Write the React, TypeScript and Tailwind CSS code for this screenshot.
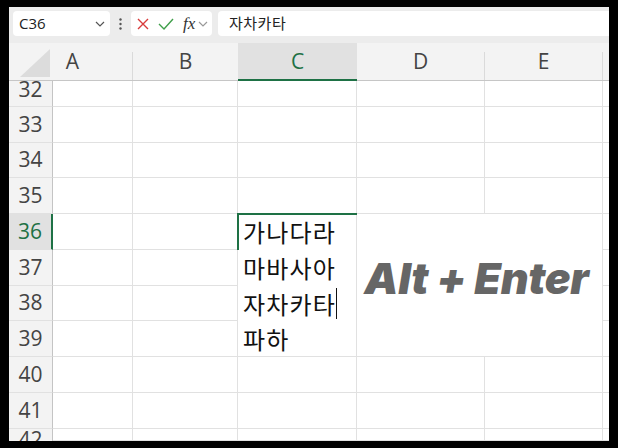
import React from "react";

const FONT = { fontFamily: '"Open Sans", "Noto Sans", "Noto Sans CJK KR", sans-serif' };
const KR = { fontFamily: '"Noto Sans CJK KR", "Noto Sans", sans-serif' };

function Chevron({ className = "" }: { className?: string }) {
  return (
    <svg width="10" height="6" viewBox="0 0 10 6" className={className}>
      <path d="M1 1 L5 5 L9 1" fill="none" stroke="currentColor" strokeWidth="1.2" />
    </svg>
  );
}

const rows = [32, 33, 34, 35, 36, 37, 38, 39, 40, 41, 42];

export default function App() {
  return (
    <div className="w-[618px] h-[448px] bg-black pt-[7px] pl-[9px] overflow-hidden" style={FONT}>
      <div className="w-[600px] h-[434px] bg-white overflow-hidden flex flex-col">
        {/* formula bar */}
        <div className="h-[36px] shrink-0 bg-[#ececec] flex items-start pt-[4px] pl-[4px]">
          <div className="w-[97px] h-[25px] bg-white rounded-[4px] flex items-center justify-between pl-[6px] pr-[5px] text-[15px] text-[#222]">
            <span>C36</span>
            <Chevron className="text-[#555]" />
          </div>
          <div className="w-[21px] h-[25px] flex items-center justify-center">
            <svg width="3" height="12" viewBox="0 0 3 12">
              <circle cx="1.5" cy="1.5" r="1.2" fill="#555" />
              <circle cx="1.5" cy="6" r="1.2" fill="#555" />
              <circle cx="1.5" cy="10.5" r="1.2" fill="#555" />
            </svg>
          </div>
          <div className="w-[81px] h-[25px] bg-white rounded-[4px] flex items-center pl-[6px]">
            <svg width="12" height="12" viewBox="0 0 12 12">
              <path d="M1 1 L11 11 M11 1 L1 11" stroke="#d83b3b" strokeWidth="1.4" fill="none" />
            </svg>
            <svg width="16" height="12" viewBox="0 0 16 12" className="ml-[9px]">
              <path d="M1 6 L6 11 L15 1" stroke="#3f9f4a" strokeWidth="1.4" fill="none" />
            </svg>
            <span className="ml-[9px] text-[17px] italic text-[#333] leading-none" style={{ fontFamily: '"Liberation Serif", serif' }}>
              fx
            </span>
            <Chevron className="ml-[3px] text-[#999]" />
          </div>
          <div className="flex-1 ml-[6px] h-[25px] bg-white rounded-l-[4px] flex items-center pl-[11px] text-[15px] tracking-[0.5px] text-[#222]" style={KR}>
            자차카타
          </div>
        </div>

        {/* column header */}
        <div className="h-[38px] shrink-0 flex bg-[#f3f3f3] text-[21px] text-[#444]">
          <div className="w-[44px] border-b border-[#c6c6c6] flex items-end justify-end pr-[3px] pb-[3px]">
            <svg width="30" height="28" viewBox="0 0 30 28">
              <polygon points="30,0 30,28 0,28" fill="#dcdcdc" />
            </svg>
          </div>
          <div className="w-[80px] border-b border-[#c6c6c6] flex">
            <div className="flex-1 flex items-center justify-center pr-[40px]">A</div>
            <div className="w-px h-[28px] self-end bg-[#dadada]" />
          </div>
          <div className="w-[105px] border-b border-[#c6c6c6] flex">
            <div className="flex-1 flex items-center justify-center">B</div>
          </div>
          <div className="w-[119px] bg-[#e1e1e1] border-b-2 border-[#1e7145] flex items-center justify-center text-[#1e7145] pt-[2px]">
            C
          </div>
          <div className="w-[128px] border-b border-[#c6c6c6] flex">
            <div className="flex-1 flex items-center justify-center">D</div>
            <div className="w-px h-[28px] self-end bg-[#dadada]" />
          </div>
          <div className="w-[118px] border-b border-[#c6c6c6] flex">
            <div className="flex-1 flex items-center justify-center">E</div>
            <div className="w-px h-[28px] self-end bg-[#dadada]" />
          </div>
          <div className="flex-1 border-b border-[#c6c6c6]" />
        </div>

        {/* grid */}
        <div className="grid grid-cols-[44px_80px_105px_119px_128px_118px_1fr] grid-rows-[26px_36px_35px_36px_36px_36px_35px_36px_36px_36px_12px] text-[#444]">
          <div className="col-start-4 row-start-5 row-span-4 bg-white border-r border-b border-[#e1e1e1] relative pl-[5px] text-[24px] tracking-[1.2px] text-[#111]" style={KR}>
            <div className="absolute -left-px -top-px w-[120px] h-[37px] border-t-2 border-l-2 border-[#1e7145]" />
            <div className="h-[36px] flex items-center">가나다라</div>
            <div className="h-[36px] flex items-center">마바사아</div>
            <div className="h-[35px] flex items-center">
              자차카타<span className="inline-block w-px h-[31px] bg-[#111]" />
            </div>
            <div className="h-[36px] flex items-center">파하</div>
          </div>
          <div className="col-start-5 col-span-2 row-start-5 row-span-4 bg-white border-r border-b border-[#e1e1e1] flex items-center justify-center pb-[14px] pr-[6px]">
            <span
              className="text-[43px] font-black italic text-[#666] tracking-[-0.3px]"
              style={{ fontFamily: 'Inter, Lato, sans-serif' }}
            >
              Alt + Enter
            </span>
          </div>
          {rows.map((n) => {
            const active = n === 36;
            const inEdit = n >= 36 && n <= 39;
            return (
              <React.Fragment key={n}>
                <div
                  className={
                    active
                      ? "bg-[#e1e1e1] border-r-2 border-[#1e7145] border-b border-b-[#e1e1e1] flex items-center justify-center text-[21px] text-[#1e7145]"
                      : n === 32
                      ? "bg-[#f3f3f3] border-r border-[#c4c4c4] border-b border-b-[#e1e1e1] flex items-center justify-center text-[21px] pb-[8px]"
                      : n === 42
                      ? "bg-[#f3f3f3] border-r border-[#c4c4c4] flex items-start justify-center text-[21px] overflow-hidden"
                      : "bg-[#f3f3f3] border-r border-[#c4c4c4] border-b border-b-[#e1e1e1] flex items-center justify-center text-[21px]"
                  }
                >
                  {n === 42 ? <span className="leading-[12px] pt-[4px]">42</span> : n}
                </div>
                <div className="border-r border-b border-[#e1e1e1]" />
                <div className="border-r border-b border-[#e1e1e1]" />
                {!inEdit && (
                  <>
                    <div className="border-r border-b border-[#e1e1e1]" />
                    <div className="border-r border-b border-[#e1e1e1]" />
                    <div className="border-r border-b border-[#e1e1e1]" />
                  </>
                )}
                <div className="border-b border-[#e1e1e1]" />
              </React.Fragment>
            );
          })}
        </div>
      </div>
    </div>
  );
}
